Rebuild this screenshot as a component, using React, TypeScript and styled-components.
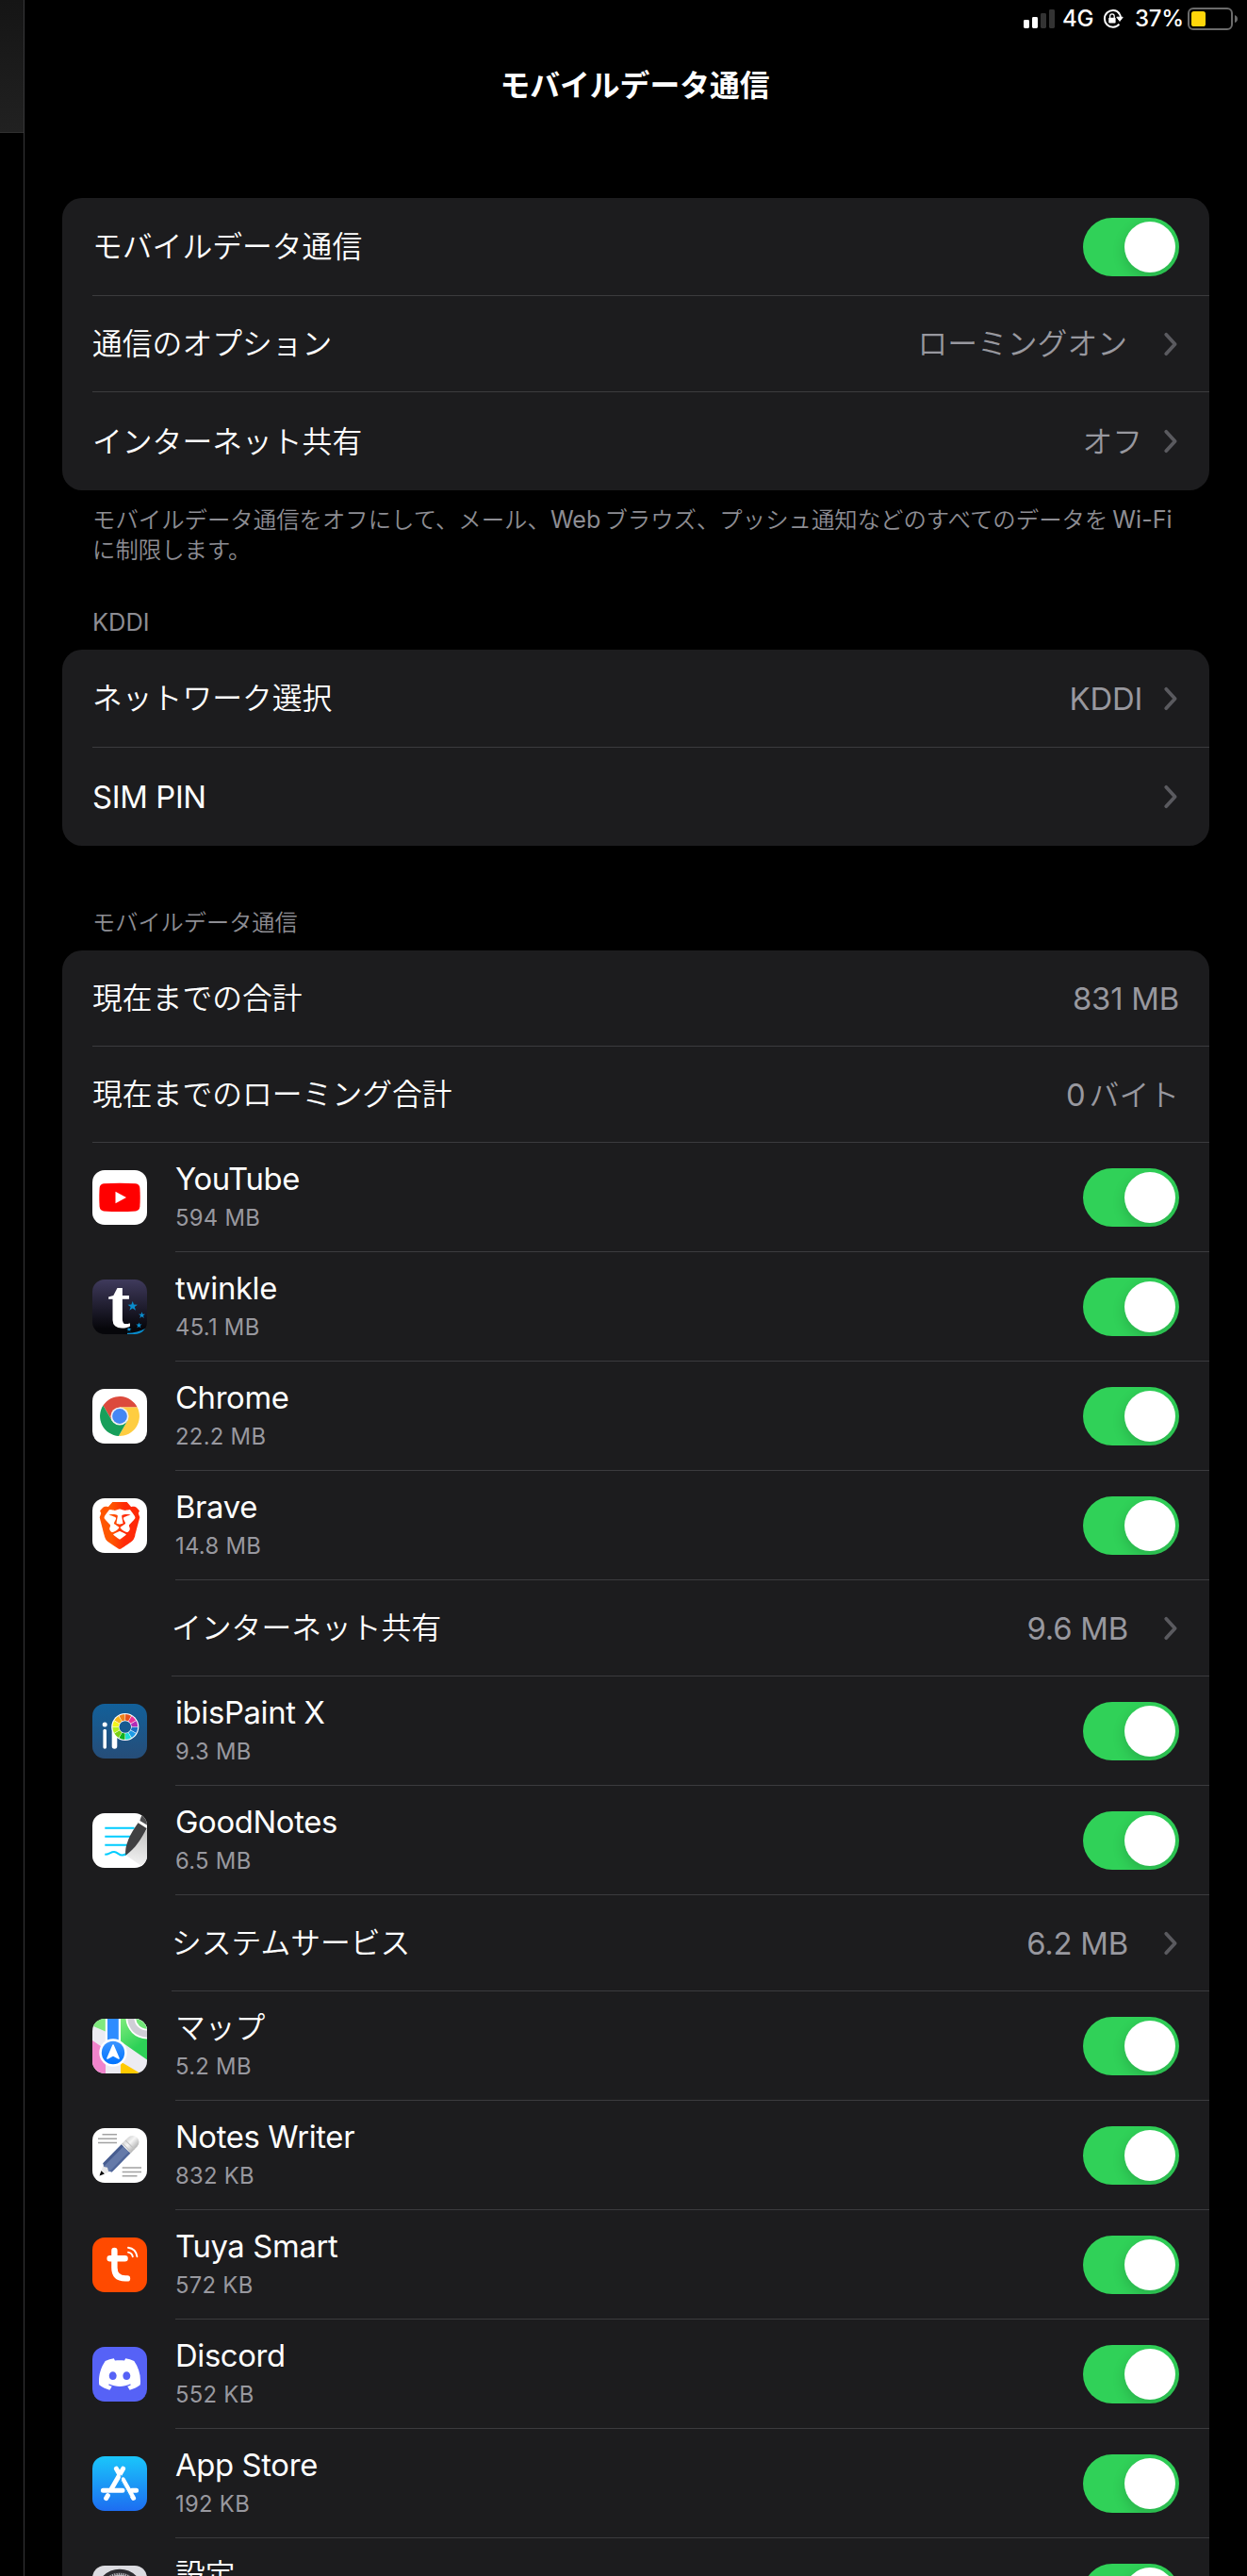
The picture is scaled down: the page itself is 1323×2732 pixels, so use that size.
import { ReactNode } from "react";
import styled, { createGlobalStyle } from "styled-components";
import { SiBrave, SiDiscord } from "react-icons/si";

interface IApp {
  name: string;
  usage: string;
  icon?: ReactNode;
  jp?: boolean;
}

const WHEEL = [
  "#e8501c",
  "#e8309a",
  "#b02cb8",
  "#1a6fc4",
  "#1e9be6",
  "#1fdcd8",
  "#12b01c",
  "#7ad014",
  "#b6f01a",
  "#f4f41a",
  "#f6b61a",
  "#f0821a",
];

function wheelSlice(index: number) {
  const point = (angle: number, r: number) => {
    const rad = ((angle - 90) * Math.PI) / 180;
    return `${34.8 + r * Math.cos(rad)} ${24.5 + r * Math.sin(rad)}`;
  };
  const from = index * 30 + 1.5;
  const to = from + 27;
  return `M${point(from, 7)}L${point(from, 13.4)}A13.4 13.4 0 0 1 ${point(to, 13.4)}L${point(to, 7)}Z`;
}

const YouTubeIcon = () => (
  <Tile viewBox="0 0 58 58">
    <rect width="58" height="58" fill="#fff" />
    <path
      d="M12 14.2Q29 13.2 46 14.2Q50 14.6 50.4 19Q51 29 50.4 38.6Q50 43 46 43.4Q29 44.4 12 43.4Q8 43 7.6 38.6Q7 29 7.6 19Q8 14.6 12 14.2Z"
      fill="#f00"
    />
    <path d="M24.5 22.8V35.2L36 29Z" fill="#fff" />
  </Tile>
);

const TwinkleIcon = () => (
  <Tile viewBox="0 0 58 58">
    <defs>
      <linearGradient id="twinkle" x1="0" y1="0" x2="0" y2="1">
        <stop offset="0" stopColor="#3f3a5c" />
        <stop offset="0.9" stopColor="#06060a" />
      </linearGradient>
    </defs>
    <rect width="58" height="58" fill="url(#twinkle)" />
    <text
      x="16"
      y="51"
      fill="#fff"
      fontFamily="'Liberation Serif', serif"
      fontWeight="700"
      fontSize="73"
    >
      t
    </text>
    <g fill="#0a8ccc">
      <path id="star" d="M42.7 23l1.3 3.6 3.9.1-3.1 2.3 1.2 3.8-3.3-2.3-3.3 2.3 1.2-3.8-3.1-2.3 3.9-.1z" />
      <use href="#star" transform="translate(23.5 18.6) scale(.68)" />
      <use href="#star" transform="translate(23.8 31.6) scale(.6)" />
      <use href="#star" transform="translate(18 39) scale(.49)" />
      <path d="M37 56.8Q48 56.5 56 52V58H37Z" />
    </g>
  </Tile>
);

const ChromeIcon = () => (
  <Tile viewBox="0 0 58 58">
    <rect width="58" height="58" fill="#fff" />
    <path d="M29 19.5H47.7A21 21 0 0 0 11.4 17.55L20.8 33.75Z" fill="#dc4a3d" />
    <path d="M29 19.5H47.7A21 21 0 0 1 27.9 49.9L37.2 33.75Z" fill="#fecd41" />
    <path d="M37.2 33.75L27.9 49.9A21 21 0 0 1 11.4 17.55L20.8 33.75Z" fill="#179f5b" />
    <circle cx="29" cy="29" r="9.6" fill="#f3f3f3" />
    <circle cx="29" cy="29" r="7.9" fill="#4587f4" />
  </Tile>
);

const BraveIcon = () => (
  <Tile viewBox="0 0 58 58">
    <defs>
      <linearGradient id="brave" x1="0" y1="0" x2="1" y2="0">
        <stop offset="0.3" stopColor="#ff5600" />
        <stop offset="0.62" stopColor="#ff2a08" />
      </linearGradient>
    </defs>
    <rect width="58" height="58" fill="#fff" />
    <SiBrave x="4" y="4" size={50} fill="url(#brave)" stroke="none" />
  </Tile>
);

const IbisIcon = () => (
  <Tile viewBox="0 0 58 58">
    <defs>
      <linearGradient id="ibis" x1="0" y1="0" x2="0" y2="1">
        <stop offset="0" stopColor="#12609a" />
        <stop offset="1" stopColor="#264d78" />
      </linearGradient>
    </defs>
    <rect width="58" height="58" fill="url(#ibis)" />
    <circle cx="13.2" cy="22" r="2.5" fill="#fff" />
    <g stroke="#fff" strokeLinecap="round">
      <path d="M13.2 28.5V46" strokeWidth="3.6" />
      <path d="M23.5 25V45" strokeWidth="5.6" />
    </g>
    <circle cx="34.8" cy="24.5" r="14.5" fill="#fff" />
    {WHEEL.map((color, i) => (
      <path key={color} d={wheelSlice(i)} fill={color} />
    ))}
    <circle cx="34.8" cy="24.5" r="6.3" fill="#175a90" />
  </Tile>
);

const GoodNotesIcon = () => (
  <Tile viewBox="0 0 58 58">
    <defs>
      <linearGradient id="penShadow" x1="0.6" y1="0" x2="0.5" y2="1">
        <stop offset="0" stopColor="#c4c4c4" />
        <stop offset="1" stopColor="#f6f6f6" />
      </linearGradient>
    </defs>
    <rect width="58" height="58" fill="#fff" />
    <path d="M35.5 44.5L58 17V58H55Z" fill="url(#penShadow)" />
    <g stroke="#0cf" strokeWidth="2" fill="none">
      <path d="M13.3 15.7H44.5M13.3 24.7H42M13.3 33.7H38" />
      <path d="M13.3 43.8C18 43.8 19 41 23 41S28 45 32 44.6Q35 44.4 37 42" />
    </g>
    <path d="M35.2 44.8C34 34 40 22 49 9.5L58 15.5C52 27 46 37 35.2 44.8Z" fill="#404042" />
    <path d="M48.6 9.4L58 15.4" stroke="#fff" strokeWidth="1.6" />
    <path d="M50.4 8C51 5 52 3 54 0H58V12.5Z" fill="#4c4c4e" />
  </Tile>
);

const MapsIcon = () => (
  <Tile viewBox="0 0 58 58">
    <defs>
      <linearGradient id="park" x1="0" y1="0" x2="0.5" y2="1">
        <stop offset="0" stopColor="#7eec7c" />
        <stop offset="0.8" stopColor="#2dd157" />
      </linearGradient>
      <linearGradient id="road" x1="0" y1="0" x2="0" y2="1">
        <stop offset="0" stopColor="#3d95ff" />
        <stop offset="1" stopColor="#0073ff" />
      </linearGradient>
    </defs>
    <rect width="58" height="58" fill="#ecebf2" />
    <path d="M0 0H14V13.5L0 7.5Z" fill="#7fe97e" />
    <path d="M30 0H58V43.5L30 24Z" fill="url(#park)" />
    <path d="M0 23L14 32.5V58H0Z" fill="#f084cc" />
    <path d="M30 45.5L51 58H30Z" fill="#ffca00" />
    <circle cx="58" cy="-1" r="22.5" fill="#fff" />
    <circle cx="58" cy="-1" r="20.7" fill="#cfced6" />
    <circle cx="58" cy="-1" r="13.6" fill="#fff" />
    <circle cx="58" cy="-1" r="11.8" fill="#72e678" />
    <path d="M13.8 0H30V30H13.8Z" fill="#fff" />
    <path d="M16 0H27.8V30H16Z" fill="#2f8cff" />
    <circle cx="22" cy="36" r="14.7" fill="#fff" />
    <circle cx="22" cy="36" r="12.2" fill="url(#road)" />
    <path
      d="M22 28L28 42L22 38.8L16 42Z"
      fill="#fff"
      stroke="#fff"
      strokeWidth="1.6"
      strokeLinejoin="round"
    />
  </Tile>
);

const NotesWriterIcon = () => (
  <Tile viewBox="0 0 58 58">
    <defs>
      <linearGradient id="metal" x1="0" y1="0" x2="0" y2="1">
        <stop offset="0" stopColor="#d6d6d6" />
        <stop offset="0.4" stopColor="#f6f6f6" />
        <stop offset="1" stopColor="#b4b4b4" />
      </linearGradient>
    </defs>
    <rect width="58" height="58" fill="#fff" />
    <g stroke="#a2a2a2" strokeWidth="1.5">
      <path d="M10.5 6.8H26M6 11.2H26M6 15.6H26" />
      <path d="M31.7 42H52M31.7 46.4H52M31.7 50.8H47.5" />
    </g>
    <g transform="translate(7.6 50.4) rotate(-45.5)">
      <path d="M0 0L14 -6.5V6.5Z" fill="#e9e9ea" />
      <path d="M0 0L5 -2.4V2.4Z" fill="#000" />
      <path d="M12 -6.6H40V6.6H12L10 3.4L12 0L10 -3.4Z" fill="#657aa9" />
      <path d="M12 -6.6H40V-3.6H11Z" fill="#475d90" />
      <path d="M12 6.6H40V4.4H11Z" fill="#506699" />
      <path d="M40 -6.8H50A6.8 6.8 0 0 1 50 6.8H40Z" fill="url(#metal)" />
      <path d="M41.5 -6.8V6.8M46 -6.8V6.8" stroke="#c2c2c2" strokeWidth="1" />
    </g>
  </Tile>
);

const TuyaIcon = () => (
  <Tile viewBox="0 0 58 58">
    <rect width="58" height="58" fill="#ff4a00" />
    <g stroke="#fff" fill="none" strokeLinecap="round">
      <path d="M23.4 14V32Q23.4 43.2 35 43.4H37M18.6 22.2H34.6" strokeWidth="6.4" />
      <path d="M38 10.8Q46 11.8 47.4 20.2M38 15.6Q42 16.4 42.8 20.2" strokeWidth="1.9" />
    </g>
  </Tile>
);

const DiscordIcon = () => (
  <Tile viewBox="0 0 58 58">
    <rect width="58" height="58" fill="#5662f6" />
    <SiDiscord x="7" y="7" size={44} fill="#fff" />
  </Tile>
);

const AppStoreIcon = () => (
  <Tile viewBox="0 0 58 58">
    <defs>
      <linearGradient id="appStore" x1="0" y1="0" x2="0" y2="1">
        <stop offset="0" stopColor="#1ac6fb" />
        <stop offset="1" stopColor="#1d6df1" />
      </linearGradient>
    </defs>
    <rect width="58" height="58" fill="url(#appStore)" />
    <g stroke="#fff" strokeWidth="5" strokeLinecap="round">
      <path d="M32.6 13.2L20.6 34M25.4 13.2L28.4 18.4" />
      <path d="M16.4 41.6L14.6 44.6" />
      <path d="M11.4 36.2H32M42 36.2H46.6" />
      <path d="M32.4 24.8L43.6 44.4" />
    </g>
    <path d="M30.2 19.8L30.6 26L40 43" stroke="#1d9bf8" strokeWidth="1" fill="none" />
  </Tile>
);

const SettingsIcon = () => (
  <Tile viewBox="0 0 58 58">
    <rect width="58" height="58" fill="#dcdce1" />
    <circle cx="29" cy="29" r="23.2" fill="#b9b9be" stroke="#2c2c30" strokeWidth="4" />
    <circle
      cx="29"
      cy="29"
      r="20.5"
      fill="none"
      stroke="#3b3b40"
      strokeWidth="2.4"
      strokeDasharray="1.2 1.2"
    />
    <circle cx="29" cy="29" r="16" fill="#8e8e93" />
  </Tile>
);

const apps: IApp[] = [
  { name: "YouTube", usage: "594 MB", icon: <YouTubeIcon /> },
  { name: "twinkle", usage: "45.1 MB", icon: <TwinkleIcon /> },
  { name: "Chrome", usage: "22.2 MB", icon: <ChromeIcon /> },
  { name: "Brave", usage: "14.8 MB", icon: <BraveIcon /> },
  { name: "インターネット共有", usage: "9.6 MB", jp: true },
  { name: "ibisPaint X", usage: "9.3 MB", icon: <IbisIcon /> },
  { name: "GoodNotes", usage: "6.5 MB", icon: <GoodNotesIcon /> },
  { name: "システムサービス", usage: "6.2 MB", jp: true },
  { name: "マップ", usage: "5.2 MB", icon: <MapsIcon />, jp: true },
  { name: "Notes Writer", usage: "832 KB", icon: <NotesWriterIcon /> },
  { name: "Tuya Smart", usage: "572 KB", icon: <TuyaIcon /> },
  { name: "Discord", usage: "552 KB", icon: <DiscordIcon /> },
  { name: "App Store", usage: "192 KB", icon: <AppStoreIcon /> },
  { name: "設定", usage: "", icon: <SettingsIcon />, jp: true },
];

const Chevron = () => (
  <ChevronSvg viewBox="0 0 16 26">
    <path d="M3.2 2.8L12.6 13L3.2 23.2" />
  </ChevronSvg>
);

const Toggle = () => (
  <Switch role="switch" aria-checked="true">
    <Knob />
  </Switch>
);

export default function App() {
  return (
    <Screen>
      <GlobalStyle />
      <Sidebar>
        <SidebarHeader />
      </Sidebar>
      <Detail>
        <StatusBar>
          <Signal viewBox="0 0 33 20">
            <rect x="0" y="11" width="6" height="9" rx="1.4" fill="#fff" />
            <rect x="9" y="8" width="6" height="12" rx="1.4" fill="#fff" />
            <rect x="18" y="4" width="6" height="16" rx="1.4" fill="#333" />
            <rect x="27" y="0" width="6" height="20" rx="1.4" fill="#333" />
          </Signal>
          <StatusText $width={43}>4G</StatusText>
          <RotationLock viewBox="0 0 22 20">
            <path d="M17.6 4.4A8.8 8.8 0 1 0 17.4 15.6" fill="none" stroke="#fff" strokeWidth="2" />
            <path d="M14.8 8.2H21.2L18 12.4Z" fill="#fff" stroke="#fff" strokeLinejoin="round" />
            <path d="M17 3.8Q19 6 18.9 9" fill="none" stroke="#fff" strokeWidth="2" />
            <rect x="6.2" y="8.8" width="7.4" height="5.8" rx="0.8" fill="#fff" />
            <path d="M7.6 9V7.2A2.3 2.3 0 0 1 12.2 7.2V9" fill="none" stroke="#fff" strokeWidth="1.3" />
          </RotationLock>
          <StatusText $width={56}>37%</StatusText>
          <Battery viewBox="0 0 53 24">
            <rect x="1" y="1" width="46" height="22" rx="5" fill="none" stroke="#6b6b6b" strokeWidth="2" />
            <rect x="4" y="4" width="15" height="16" rx="2.6" fill="#ffd60a" />
            <path d="M50 8Q53 9 53 12T50 16Z" fill="#6b6b6b" />
          </Battery>
        </StatusBar>
        <Title>モバイルデータ通信</Title>

        <Card>
          <Row $height={104}>
            <RowBody>
              <Label $jp>モバイルデータ通信</Label>
              <Toggle />
            </RowBody>
          </Row>
          <Row $height={102}>
            <RowBody>
              <Label $jp>通信のオプション</Label>
              <Value $jp $gap={38}>
                ローミングオン
              </Value>
              <Chevron />
            </RowBody>
          </Row>
          <Row $height={104}>
            <RowBody>
              <Label $jp>インターネット共有</Label>
              <Value $jp $gap={22}>
                オフ
              </Value>
              <Chevron />
            </RowBody>
          </Row>
        </Card>
        <Footnote>
          モバイルデータ通信をオフにして、メール、<Latin>Web</Latin>
          ブラウズ、プッシュ通知などのすべてのデータを<Latin $before={5}>Wi-Fi</Latin>
          <br />
          に制限します。
        </Footnote>

        <SectionHeader $top={45}>KDDI</SectionHeader>
        <Card>
          <Row $height={104}>
            <RowBody>
              <Label $jp>ネットワーク選択</Label>
              <Value $gap={22}>KDDI</Value>
              <Chevron />
            </RowBody>
          </Row>
          <Row $height={104}>
            <RowBody>
              <Label>SIM PIN</Label>
              <Chevron />
            </RowBody>
          </Row>
        </Card>

        <SectionHeader $top={66} $jp>
          モバイルデータ通信
        </SectionHeader>
        <Card>
          <Row $height={102}>
            <RowBody>
              <Label $jp>現在までの合計</Label>
              <Value>831 MB</Value>
            </RowBody>
          </Row>
          <Row $height={102}>
            <RowBody>
              <Label $jp>現在までのローミング合計</Label>
              <Value $jp>
                <Latin>0</Latin>バイト
              </Value>
            </RowBody>
          </Row>
          {apps.map((app) =>
            app.icon ? (
              <Row $height={116} key={app.name}>
                {app.icon}
                <RowBody>
                  <AppText>
                    <Label $jp={app.jp}>{app.name}</Label>
                    <Usage>{app.usage}</Usage>
                  </AppText>
                  <Toggle />
                </RowBody>
              </Row>
            ) : (
              <Row $height={102} $indent={116} key={app.name}>
                <RowBody>
                  <Label $jp={app.jp}>{app.name}</Label>
                  <Value $gap={37}>{app.usage}</Value>
                  <Chevron />
                </RowBody>
              </Row>
            )
          )}
        </Card>
      </Detail>
    </Screen>
  );
}

const GlobalStyle = createGlobalStyle`
  * {
    box-sizing: border-box;
  }

  body {
    margin: 0;
    background: #000;
    color: #fff;
    font-family: Inter, "Noto Sans CJK JP", sans-serif;
  }
`;

const Screen = styled.div`
  display: flex;
  width: 1323px;
  height: 2732px;
  overflow: hidden;
  background: #000;
`;

const Sidebar = styled.aside`
  flex: none;
  width: 26px;
  border-right: 1px solid #38383a;
`;

const SidebarHeader = styled.div`
  height: 141px;
  background: linear-gradient(#151515, #212121);
  border-bottom: 1px solid #303030;
`;

const Detail = styled.main`
  flex: 1;
  min-width: 0;
  padding: 0 40px;
`;

const StatusBar = styled.header`
  display: flex;
  align-items: center;
  justify-content: flex-end;
  height: 40px;
  margin-right: -30px;
`;

const StatusText = styled.span<{ $width: number }>`
  width: ${(p) => p.$width}px;
  font-size: 24px;
  font-weight: 450;
  letter-spacing: -0.3px;
  line-height: 40px;
  white-space: nowrap;
`;

const Signal = styled.svg`
  width: 33px;
  height: 20px;
  margin-right: 8px;
`;

const RotationLock = styled.svg`
  width: 22px;
  height: 20px;
  margin-right: 12px;
`;

const Battery = styled.svg`
  width: 53px;
  height: 24px;
`;

const Title = styled.h1`
  margin: 31px 0 99px -2px;
  text-align: center;
  font-size: 31.8px;
  font-weight: 700;
  line-height: 40px;
`;

const Card = styled.section`
  border-radius: 21px;
  background: #1c1c1e;
`;

const RowBody = styled.div`
  display: flex;
  flex: 1;
  align-items: center;
  justify-content: space-between;
  padding-right: 32px;
  border-bottom: 1px solid #3b3b3e;
`;

const Row = styled.div<{ $height: number; $indent?: number }>`
  display: flex;
  height: ${(p) => p.$height}px;
  padding-left: ${(p) => p.$indent ?? 32}px;

  &:last-child ${RowBody} {
    border-bottom: none;
  }
`;

const Label = styled.span<{ $jp?: boolean }>`
  flex: 1;
  padding-top: ${(p) => (p.$jp ? 1 : 0)}px;
  font-size: ${(p) => (p.$jp ? 31.8 : 32.8)}px;
  font-weight: ${(p) => (p.$jp ? 350 : 380)};
  letter-spacing: ${(p) => (p.$jp ? 0 : -0.35)}px;
  line-height: 40px;
  white-space: nowrap;
`;

const Value = styled.span<{ $jp?: boolean; $gap?: number }>`
  margin-right: ${(p) => p.$gap ?? 0}px;
  padding-top: 1px;
  color: #98989f;
  font-size: ${(p) => (p.$jp ? 31.8 : 32.8)}px;
  font-weight: ${(p) => (p.$jp ? 350 : 380)};
  letter-spacing: ${(p) => (p.$jp ? 0 : -0.2)}px;
  line-height: 40px;
  white-space: nowrap;
`;

const AppText = styled.div`
  display: flex;
  flex: 1;
  flex-direction: column;
  align-self: stretch;
  gap: 8px;
  padding-top: 18px;

  ${Label} {
    flex: none;
    height: 40px;
  }
`;

const Usage = styled.span`
  height: 28px;
  color: #98989f;
  font-size: 23.8px;
  font-weight: 380;
  line-height: 28px;
  letter-spacing: 0.3px;
`;

const Footnote = styled.p`
  margin: 15px 0 0;
  padding-left: 32px;
  color: #8d8d93;
  font-size: 24.4px;
  font-weight: 350;
  line-height: 32px;
  white-space: nowrap;
`;

const Latin = styled.span<{ $before?: number }>`
  margin: 0 4px 0 ${(p) => p.$before ?? 0}px;
  font-size: 1.03em;
  font-weight: 380;
`;

const SectionHeader = styled.h2<{ $top: number; $jp?: boolean }>`
  margin: ${(p) => p.$top}px 0 13px;
  padding-left: 32px;
  color: #8d8d93;
  font-size: ${(p) => (p.$jp ? 24.2 : 25.4)}px;
  font-weight: ${(p) => (p.$jp ? 350 : 380)};
  line-height: 32px;
`;

const Tile = styled.svg`
  flex: none;
  align-self: center;
  width: 58px;
  height: 58px;
  margin-right: 30px;
  border-radius: 13px;
`;

const ChevronSvg = styled.svg`
  width: 16px;
  height: 26px;
  margin-right: 1px;
  fill: none;
  stroke: #5a5a5f;
  stroke-width: 3.8;
  stroke-linecap: round;
  stroke-linejoin: round;
`;

const Switch = styled.div`
  display: flex;
  justify-content: flex-end;
  width: 102px;
  height: 62px;
  padding: 4px;
  overflow: hidden;
  border-radius: 31px;
  background: #30d158;
`;

const Knob = styled.span`
  width: 54px;
  height: 54px;
  border-radius: 50%;
  background: #fff;
  box-shadow: 0 5px 14px rgba(0, 0, 0, 0.16);
`;
